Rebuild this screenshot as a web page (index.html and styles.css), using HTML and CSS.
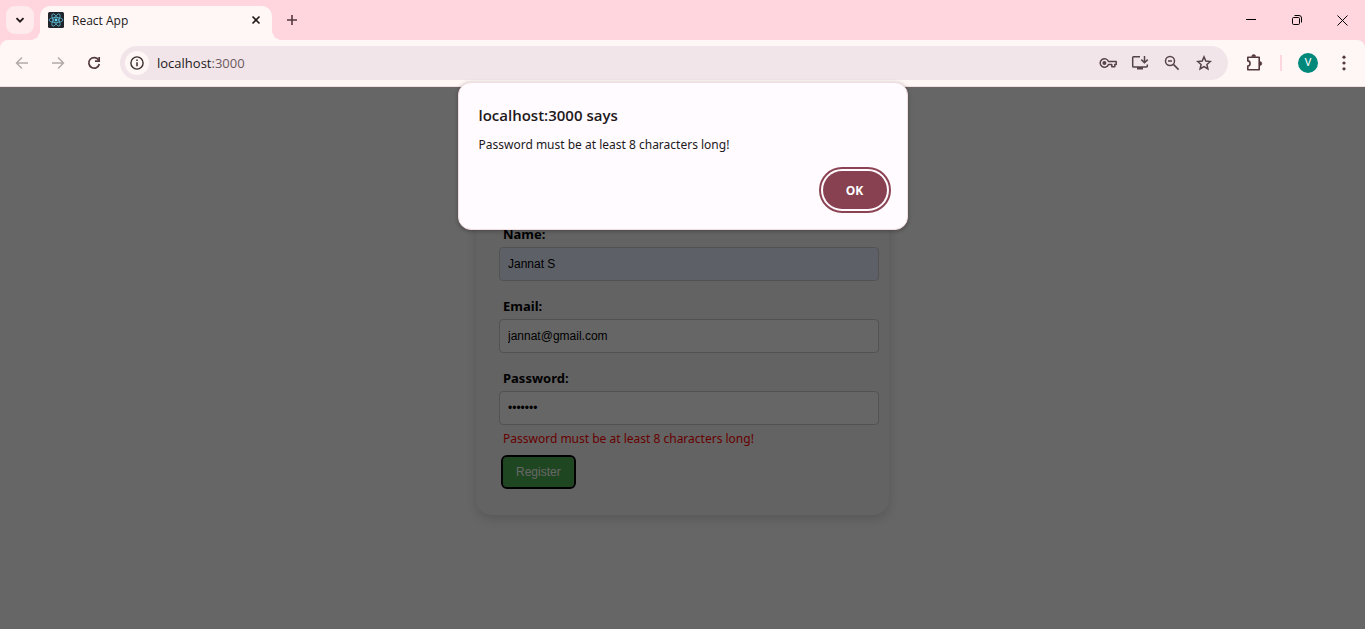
FILE: index.html
```html
<!DOCTYPE html>
<html lang="en">
<head>
<meta charset="utf-8">
<title>React App</title>
<link rel="stylesheet" href="styles.css">
</head>
<body>
<div class="browser">
  <header class="tab-strip">
    <button class="tab-search" aria-label="Search tabs">
      <svg width="10" height="10" viewBox="0 0 10 10"><path d="M1.500 3.200 5 6.700l3.500-3.500" fill="none" stroke="#22191b" stroke-width="1.900"/></svg>
    </button>
    <div class="tab">
      <svg class="favicon" width="16" height="16" viewBox="0 0 16 16">
        <rect width="16" height="16" rx="1.500" fill="#20232a"/>
        <g fill="none" stroke="#58b9d3" stroke-width=".8">
          <ellipse cx="8" cy="8" rx="6.900" ry="2.600"/>
          <ellipse cx="8" cy="8" rx="6.900" ry="2.600" transform="rotate(60 8 8)"/>
          <ellipse cx="8" cy="8" rx="6.900" ry="2.600" transform="rotate(120 8 8)"/>
        </g>
        <circle cx="8" cy="8" r="1.400" fill="#61dafb"/>
      </svg>
      <span class="tab-title">React App</span>
      <button class="tab-close" aria-label="Close tab">
        <svg width="10" height="10" viewBox="0 0 10 10"><path d="m1.500 1.500 7 7m0-7-7 7" stroke="#22191b" stroke-width="1.600"/></svg>
      </button>
    </div>
    <button class="new-tab" aria-label="New tab">
      <svg width="12" height="12" viewBox="0 0 12 12"><path d="M6 1v10M1 6h10" stroke="#54393e" stroke-width="1.600"/></svg>
    </button>
    <div class="window-controls">
      <button aria-label="Minimize"><svg width="10" height="10" viewBox="0 0 10 10"><path d="M0 4.500h10" stroke="#000"/></svg></button>
      <button aria-label="Restore"><svg width="10" height="10" viewBox="0 0 10 10"><g fill="none" stroke="#000"><rect x=".5" y="2.500" width="7" height="7" rx="1.200"/><path d="M2.500.5H7A2.500 2.500 0 0 1 9.500 3v4.500"/></g></svg></button>
      <button aria-label="Close"><svg width="11" height="11" viewBox="0 0 11 11"><path d="m.5.5 10 10m0-10-10 10" stroke="#000"/></svg></button>
    </div>
  </header>

  <nav class="toolbar">
    <button class="tool disabled" aria-label="Back"><svg width="14" height="14" viewBox="0 0 14 14"><path d="M13 7H2M7 1.500 1.500 7 7 12.500" fill="none" stroke="currentColor" stroke-width="1.500"/></svg></button>
    <button class="tool disabled" aria-label="Forward"><svg width="14" height="14" viewBox="0 0 14 14"><path d="M1 7h11M7 1.500 12.500 7 7 12.500" fill="none" stroke="currentColor" stroke-width="1.500"/></svg></button>
    <button class="tool" aria-label="Reload"><svg width="14" height="14" viewBox="0 0 14 14"><path d="M11.600 4A5.300 5.300 0 1 0 12.300 8" fill="none" stroke="currentColor" stroke-width="1.700"/><path d="M12.200 1v4.200H8" fill="none" stroke="currentColor" stroke-width="1.700"/></svg></button>
    <div class="omnibox">
      <button class="site-info" aria-label="Site information"><svg width="14" height="14" viewBox="0 0 14 14"><circle cx="7" cy="7" r="6.100" fill="none" stroke="#3b2d30" stroke-width="1.400"/><path d="M7 6.200v4M7 3.500V5" stroke="#3b2d30" stroke-width="1.500"/></svg></button>
      <a class="url" href="#">localhost<span>:3000</span></a>
      <button class="action" aria-label="Manage passwords"><svg width="18" height="12" viewBox="0 0 18 12"><path d="M9.500 4.500h7.700v3h-1.400v2.300h-3V7.500H9.500A4.300 4.300 0 1 1 9.500 4.500Z" fill="none" stroke="currentColor" stroke-width="1.500" stroke-linejoin="round"/><circle cx="5.400" cy="6" r="2" fill="currentColor"/></svg></button>
      <button class="action" aria-label="Install app"><svg width="18" height="16" viewBox="0 0 18 16"><path d="M9 1.800H2.500a.8.8 0 0 0-.8.8v8.600c0 .5.300.8.8.8h13a.8.8 0 0 0 .8-.8V9.500" fill="none" stroke="currentColor" stroke-width="1.500"/><path d="M6 12h6v2.500H6z" fill="currentColor"/><path d="M13.500 1v6.500M10.300 4.600l3.200 3.200 3.200-3.200" fill="none" stroke="currentColor" stroke-width="1.500"/></svg></button>
      <button class="action" aria-label="Zoom"><svg width="16" height="16" viewBox="0 0 16 16"><g fill="none" stroke="currentColor" stroke-width="1.500"><circle cx="6" cy="6" r="4.500"/><path d="m9.400 9.400 5.200 5.200M4 6h4"/></g></svg></button>
      <button class="action" aria-label="Bookmark this tab"><svg width="16" height="16" viewBox="0 0 16 16"><path d="m8 1.900 1.800 4.200 4.600.4-3.500 3 1 4.500L8 11.600 4.100 14l1-4.500-3.500-3 4.600-.4Z" fill="none" stroke="currentColor" stroke-width="1.500"/></svg></button>
    </div>
    <button class="tool" aria-label="Extensions"><svg width="18" height="18" viewBox="0 0 18 18"><path d="M2.800 3.200h11.400v12.600H2.800v-3.700c3-.3 3-4.900 0-5.200Z" fill="none" stroke="currentColor" stroke-width="1.600" stroke-linejoin="round"/><path d="M6.700 2.600a2 2 0 0 1 4 0ZM14.800 7.600a2 2 0 0 1 0 4Z" fill="currentColor" stroke="currentColor" stroke-width=".6"/></svg></button>
    <span class="divider"></span>
    <button class="tool" aria-label="Profile"><span class="avatar">V</span></button>
    <button class="tool" aria-label="Menu"><svg width="4" height="16" viewBox="0 0 4 16"><g fill="currentColor"><circle cx="2" cy="2.200" r="1.600"/><circle cx="2" cy="8" r="1.600"/><circle cx="2" cy="13.800" r="1.600"/></g></svg></button>
  </nav>

  <main class="page">
    <form class="card">
      <div class="field">
        <label for="name">Name:</label>
        <input class="autofilled" id="name" type="text" value="Jannat S">
      </div>
      <div class="field">
        <label for="email">Email:</label>
        <input id="email" type="email" value="jannat@gmail.com">
      </div>
      <div class="field">
        <label for="password">Password:</label>
        <input id="password" type="password" value="secret7" aria-describedby="password-error">
        <p class="error" id="password-error">Password must be at least 8 characters long!</p>
      </div>
      <button class="register" type="button">Register</button>
    </form>
  </main>

  <dialog class="alert" open aria-labelledby="alert-title">
    <h1 id="alert-title">localhost:3000 says</h1>
    <p>Password must be at least 8 characters long!</p>
    <button class="ok" type="button">OK</button>
  </dialog>
</div>
</body>
</html>
```

FILE: styles.css
```css
* { box-sizing: border-box; }

body {
  margin: 0;
  font-family: "Open Sans", "Noto Sans", sans-serif;
  font-size: 13px;
}

button {
  border: 0;
  padding: 0;
  background: none;
  color: inherit;
  font: inherit;
}

svg { display: block; flex: none; }

.browser {
  display: flex;
  flex-direction: column;
  min-height: 100vh;
  background: #ffd6dd;
  position: relative;
}

/* Tab strip */
.tab-strip {
  display: flex;
  height: 40px;
  padding: 6px 0 0 6px;
}

.tab-search {
  display: grid;
  place-items: center;
  width: 28px;
  height: 28px;
  margin-right: 6px;
  border-radius: 9px;
  background: #ffebee;
}

.tab {
  position: relative;
  display: flex;
  align-items: center;
  width: 232px;
  padding: 0 8px 6px;
  border-radius: 10px 10px 0 0;
  background: #fff7f6;
  color: #22191b;
  font-size: 12px;
}

.tab::before,
.tab::after {
  content: "";
  position: absolute;
  bottom: 0;
  width: 10px;
  height: 10px;
}

.tab::before {
  right: 100%;
  background: radial-gradient(circle at 0 0, transparent 10px, #fff7f6 10px);
}

.tab::after {
  left: 100%;
  background: radial-gradient(circle at 100% 0, transparent 10px, #fff7f6 10px);
}

.tab-title { flex: 1; margin-left: 8px; }

.tab-close {
  display: grid;
  place-items: center;
  width: 16px;
  height: 16px;
}

.new-tab {
  display: grid;
  place-items: center;
  width: 28px;
  height: 28px;
  margin-left: 6px;
}

.window-controls {
  display: grid;
  grid-template-columns: 46px 46px 45px;
  height: 28px;
  margin-left: auto;
}

.window-controls button { display: grid; place-items: center; }

/* Toolbar */
.toolbar {
  display: flex;
  align-items: center;
  height: 47px;
  padding: 0 3px 1px 4px;
  border-bottom: 1px solid #f3dde0;
  border-radius: 8px 8px 0 0;
  background: #fff7f6;
  color: #54393e;
}

.tool {
  display: grid;
  place-items: center;
  width: 36px;
  height: 34px;
}

.disabled { color: #b3a9aa; }

.omnibox {
  display: flex;
  flex: 1;
  align-items: center;
  height: 34px;
  margin: 0 8px;
  padding: 0 8px 0 5px;
  border-radius: 17px;
  background: #f2e5e9;
}

.site-info {
  display: grid;
  place-items: center;
  width: 24px;
  height: 24px;
  margin-right: 8px;
  border-radius: 50%;
  background: #fff7f6;
}

.url {
  flex: 1;
  color: #22191b;
  font-size: 13px;
  text-decoration: none;
}

.url span { color: #6a5a5d; }

.action {
  display: grid;
  place-items: center;
  width: 32px;
  height: 32px;
  color: #54434a;
}

.divider {
  width: 2px;
  height: 16px;
  margin: 0 8px;
  background: #ffd6dd;
}

.avatar {
  display: grid;
  place-items: center;
  width: 20px;
  height: 20px;
  border-radius: 50%;
  background: #00897b;
  color: #fff;
  font-family: Roboto, sans-serif;
  font-size: 11px;
}

/* Page behind the alert */
.page {
  position: relative;
  flex: 1;
  padding: 40px 0;
  background: #fff;
}

.page::after {
  content: "";
  position: absolute;
  inset: 0;
  background: rgba(0, 0, 0, 0.6);
}

.card {
  width: 413px;
  margin: 0 auto;
  padding: 96px 10px 28px 23px;
  border-radius: 16px;
  background: #f7f7f7;
  box-shadow: 0 4px 12px rgba(0, 0, 0, 0.15);
}

.field + .field { margin-top: 14px; }

.field label {
  display: block;
  padding: 0 4px 2px;
  color: #000;
  font-family: "Noto Sans", sans-serif;
  font-weight: 700;
  line-height: 22px;
}

.field input {
  display: block;
  width: 100%;
  height: 34px;
  padding: 0 8px;
  border: 1px solid #ccc;
  border-radius: 4px;
  background: #fff;
  color: #000;
  font-family: "Liberation Sans", Arial, sans-serif;
  font-size: 12px;
}

.field .autofilled { background: #e8f0fe; }

.error {
  margin: 4px 4px 8px;
  color: #f00;
  font-family: "Noto Sans", sans-serif;
  font-size: 12px;
  line-height: 20px;
}

.register {
  display: block;
  height: 30px;
  margin: 0 4px;
  padding: 0 13px;
  border-radius: 4px;
  outline: 2px solid #000;
  background: #4caf50;
  color: #fff;
  font-family: "Liberation Sans", Arial, sans-serif;
  font-size: 12px;
}

/* Alert */
.alert {
  position: absolute;
  top: 82px;
  right: 0;
  left: 0;
  display: flex;
  flex-direction: column;
  width: 450px;
  margin: 0 auto;
  padding: 20px;
  border: 1px solid #f3dde0;
  border-radius: 13px;
  background: #fffbff;
  box-shadow: 0 1px 4px rgba(0, 0, 0, 0.3);
  color: #22191b;
}

.alert h1 {
  margin: 0;
  font-size: 15px;
  font-weight: 600;
  line-height: 24px;
}

.alert p {
  margin: 8px 0 16px;
  font-family: "Noto Sans", sans-serif;
  font-size: 12px;
  line-height: 20px;
}

.ok {
  align-self: flex-end;
  width: 64px;
  height: 38px;
  border-radius: 19px;
  outline: 2px solid #8c4454;
  outline-offset: 2px;
  background: #874151;
  color: #fff;
  font-size: 12px;
  font-weight: 700;
}
```
